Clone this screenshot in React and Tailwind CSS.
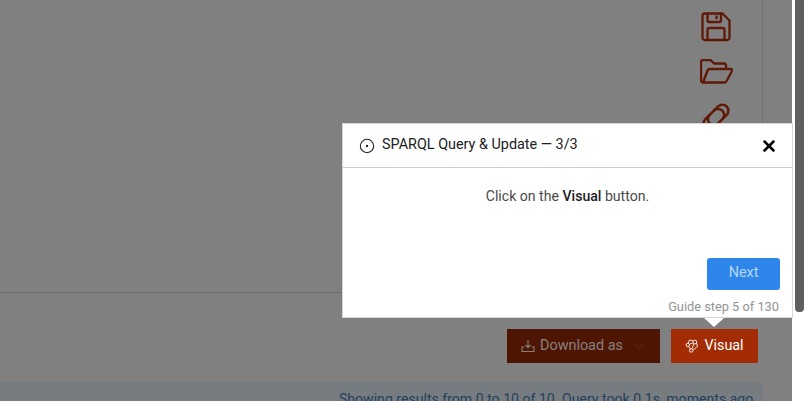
import { CircleDot, X } from "lucide-react";

function SaveIcon() {
  return (
    <svg width="30" height="30" viewBox="0 0 30 30" fill="none" stroke="currentColor" strokeWidth="2.3" strokeLinejoin="round">
      <path d="M3.500 1.500h18L28.500 8.500v17a2.500 2.500 0 0 1-2.500 2.500H4a2.500 2.500 0 0 1-2.500-2.500V4a2.500 2.500 0 0 1 2-2.500z" />
      <path d="M6.500 2v6.500a1.500 1.500 0 0 0 1.500 1.500h10.500a1.500 1.500 0 0 0 1.500-1.500V2" />
      <path d="M15.500 3.500v3.500" />
      <path d="M6.500 27.500V18a2 2 0 0 1 2-2h13a2 2 0 0 1 2 2v9.500" />
    </svg>
  );
}

function FolderIcon() {
  return (
    <svg width="33" height="25" viewBox="0 0 33 25" fill="none" stroke="currentColor" strokeWidth="2.3" strokeLinejoin="round">
      <path d="M3 23.500a2 2 0 0 1-2-2V3a2 2 0 0 1 2-2h7.500l3.500 3.500h10a2 2 0 0 1 2 2V10" />
      <path d="M3 23.500h21.500a2 2 0 0 0 1.800-1L32 12a1.400 1.400 0 0 0-1.200-2H9.500a2 2 0 0 0-1.800 1z" />
    </svg>
  );
}

function LinkIcon() {
  return (
    <svg width="32" height="32" viewBox="0 0 32 32" fill="none" stroke="currentColor" strokeWidth="2.5" strokeLinecap="round">
      <g transform="rotate(-45 16 16)">
        <path d="M13 22a6 6 0 0 1 0-12h12a6 6 0 0 1 0 12h-5" />
        <path d="M19 10a6 6 0 0 1 0 12H7a6 6 0 0 1 0-12h5" />
      </g>
    </svg>
  );
}

function DownloadIcon() {
  return (
    <svg width="14" height="14" viewBox="0 0 14 14" fill="none" stroke="currentColor" strokeWidth="1.1" className="mr-[5px]">
      <path d="M7 1v7.500M4.500 6 7 8.500 9.500 6" />
      <path d="M3.500 8H1v4.500h12V8h-2.500" />
    </svg>
  );
}

function VisualIcon() {
  return (
    <svg width="14" height="14" viewBox="0 0 14 14" fill="none" stroke="currentColor" strokeWidth="0.9" className="mr-[5px]">
      <circle cx="2.800" cy="6" r="1.700" />
      <circle cx="9.800" cy="3" r="1.900" />
      <circle cx="6.200" cy="11.500" r="1.700" />
      <path d="M4.400 5.300 8 3.800M3.800 7.500l1.500 2.600M9 4.900 6.800 9.800M11.500 4l1 3.500L8 11M3 4.300 4.500 1l3.500.8" />
    </svg>
  );
}

export default function App() {
  return (
    <div className="relative flex h-[401px] w-[807px] overflow-hidden bg-white font-['Roboto',sans-serif]">
      <div className="flex w-[792px] flex-col bg-[#808080]">
        <div className="h-[293px] w-full shrink-0 border-b border-[#6b6b6b]">
          <div className="ml-auto mr-[29px] flex h-full w-[93px] flex-col items-center border-r border-[#717171] pt-[12px] text-[#5f1906]">
            <SaveIcon />
            <div className="mt-[17px]"><FolderIcon /></div>
            <div className="mt-[17px]"><LinkIcon /></div>
          </div>
        </div>

        <div className="mr-[34px] mt-[36px] flex justify-end gap-[11px]">
          <button className="flex h-[34px] w-[153px] items-center justify-start bg-[#4f1503] pl-[14px] text-[14.4px] text-[#86807e]">
            <DownloadIcon />
            Download as
            <svg width="12" height="7" viewBox="0 0 12 7" fill="none" stroke="#5f2412" strokeWidth="1" className="ml-[10px]">
              <path d="M1 1l5 5 5-5" />
            </svg>
          </button>
          <button className="z-20 flex h-[34px] w-[87px] items-center justify-center bg-[#a32c05] text-[14.3px] text-white">
            <VisualIcon />
            Visual
          </button>
        </div>

        <div className="mr-[29px] mt-[19px] flex-1 bg-[#767c7f] pr-[6px] pt-[8px] text-right text-[14.1px] leading-[19px] text-[#24405c]">
          Showing results from 0 to 10 of 10. Query took 0.1s, moments ago.
        </div>
      </div>

      <div className="w-[15px] pl-[3px]">
        <div className="h-[312px] w-[9px] rounded-b-[4px] bg-[#5f5f5f]" />
      </div>

      <div className="absolute left-[342px] top-[123px] z-10 h-[195px] w-[451px] border border-[#d6d6d6] bg-white">
        <div className="flex h-[44px] items-center border-b border-[#cfcfcf] pl-[16px] pr-[14px] text-[14.4px] text-[#212121]">
          <CircleDot size={16} strokeWidth={1.6} className="mr-[7px] mt-[1px] text-[#212121]" />
          <span className="-mt-[1px]">SPARQL Query &amp; Update — 3/3</span>
          <X size={18} strokeWidth={3.4} className="ml-auto text-black" />
        </div>
        <p className="mt-[18px] text-center text-[14.1px] leading-[20px] text-[#4a4a4a]">
          Click on the <strong className="font-medium text-[#212121]">Visual</strong> button.
        </p>
        <div className="mt-[52px] flex justify-end pr-[12px]">
          <button className="h-[32px] w-[73px] rounded-[3px] bg-[#2e86eb] pb-[2px] text-[14.4px] text-[#b5d6f8]">Next</button>
        </div>
        <p className="mt-[9px] pr-[13px] text-right text-[12.8px] leading-[15px] text-[#949494]">Guide step 5 of 130</p>
      </div>
      <div className="absolute left-[704px] top-[318px] z-10 h-0 w-0 border-x-[10px] border-t-[9px] border-x-transparent border-t-white" />
    </div>
  );
}
